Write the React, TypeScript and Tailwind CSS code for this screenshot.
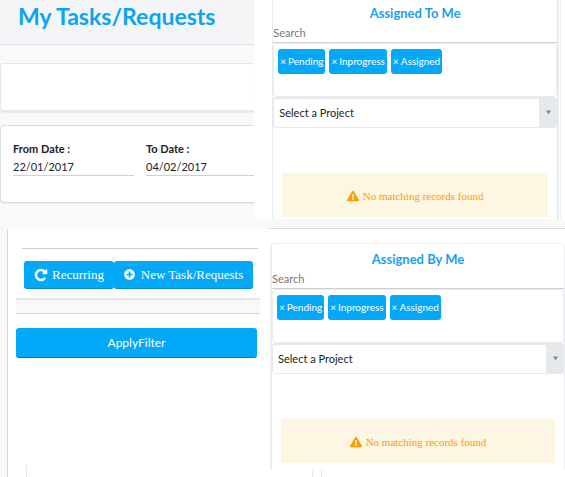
import { FaExclamationTriangle, FaPlusCircle } from "react-icons/fa";

const statuses = ["Pending", "Inprogress", "Assigned"];

function RepeatIcon() {
  return (
    <svg width="14" height="14" viewBox="0 0 1792 1792" fill="currentColor" stroke="currentColor" strokeWidth="60" aria-hidden="true">
      <path d="M1664 256v448q0 26-19 45t-45 19h-448q-42 0-59-40-17-39 14-69l138-138q-148-137-349-137-104 0-198.5 40.5t-163.5 109.5-109.5 163.5-40.5 198.5 40.5 198.5 109.5 163.5 163.5 109.5 198.5 40.5q119 0 225-52t179-147q7-10 23-12 15 0 25 9l137 138q9 8 9.5 20.5t-7.5 22.5q-109 132-264 204.5t-327 72.5q-156 0-298-61t-245-164-164-245-61-298 61-298 164-245 245-164 298-61q147 0 284.5 55.5t244.5 156.5l130-129q29-31 70-14 39 17 39 59z" />
    </svg>
  );
}

function DateField({ id, label, value, className }: { id: string; label: string; value: string; className: string }) {
  return (
    <div className={className}>
      <label htmlFor={id} className="block text-[11px] leading-4 font-bold text-[#222]">
        {label}
      </label>
      <input
        id={id}
        type="text"
        defaultValue={value}
        className="block h-[19px] w-full border-b border-[#d0d0d0] bg-transparent text-[11px] text-[#222] outline-none"
      />
    </div>
  );
}

function TaskPanel({ id, title }: { id: string; title: string }) {
  return (
    <>
      <h2 className="text-center text-[13px] leading-5 font-bold text-[#1a9ff0]">{title}</h2>
      <input
        type="text"
        aria-label={`Search ${title}`}
        placeholder="Search"
        className="block h-5 w-full border-b border-[#cfcfcf] bg-transparent text-[11px] text-[#333] outline-none placeholder:text-[#777]"
      />
      <div className="flex h-[54px] items-start gap-1 rounded-sm border border-[#e8ecef] pt-[5px] pl-1">
        {statuses.map((status) => (
          <button
            key={status}
            type="button"
            className="flex h-[25px] items-center gap-0.5 rounded-[3px] bg-[#03a9f8] px-0.5 text-[10px] whitespace-nowrap text-white"
          >
            <span aria-hidden="true">×</span>
            {status}
          </button>
        ))}
      </div>
      <div className="grid">
        <select
          id={id}
          aria-label={`Project for ${title}`}
          className="col-start-1 row-start-1 h-[31px] w-full appearance-none rounded-sm border border-t-2 border-[#e5e9ec] bg-white px-[5px] text-[11px] text-[#222] outline-none"
        >
          <option>Select a Project</option>
        </select>
        <span className="pointer-events-none col-start-1 row-start-1 flex h-[31px] w-[18px] items-center justify-center justify-self-end rounded-r-sm bg-[#e5e9ec]">
          <svg width="5" height="5" viewBox="0 0 5 5" aria-hidden="true">
            <path d="M0 0.5h5L2.5 4.5z" fill="#888" />
          </svg>
        </span>
      </div>
      <div className="mx-[9px] mt-[45px] flex h-11 items-center justify-center gap-1 bg-[#fdf6e2] pt-0.5 font-['Liberation_Serif',serif] text-[11px] text-[#ff9c07]">
        <FaExclamationTriangle size={12} aria-hidden="true" />
        No matching records found
      </div>
    </>
  );
}

export default function App() {
  return (
    <main className="min-h-screen overflow-hidden bg-white font-['Lato',sans-serif]">
      <div className="flex h-[219px]">
        <section className="w-[45%] shrink-0 bg-[#f9f9f9]">
          <header className="h-[45px] border-b border-[#dbe1e6] bg-[#f3f5f7] pt-px pl-[18px]">
            <h1 className="text-[23px] leading-[30px] font-bold whitespace-nowrap text-[#09a5f5]">My Tasks/Requests</h1>
          </header>
          <div className="mt-[18px] h-12 rounded-l-sm border border-r-0 border-[#e5e7e9] bg-white shadow-[0_2px_1px_#e9e9e9]" />
          <div className="mt-[14px] flex h-[78px] gap-3 rounded-l-sm border border-r-0 border-[#d9dbdd] bg-white pt-[15px] pl-3 shadow-[0_1px_1px_#eeeeee]">
            <DateField id="from-date" label="From Date :" value="22/01/2017" className="w-[121px]" />
            <DateField id="to-date" label="To Date :" value="04/02/2017" className="min-w-0 flex-1" />
          </div>
        </section>
        <section className="mr-px ml-[18px] min-w-0 flex-1 border-r-2 border-l border-[#e8ebef] pt-[3px]">
          <TaskPanel id="project-to" title="Assigned To Me" />
        </section>
        <div className="w-[5px] border-l border-[#f0f0f0]" />
      </div>

      <div className="flex h-[10px] bg-[#f9f9f9]">
        <div className="w-[269px]" />
        <div className="flex-1 border-b border-[#dcdcdc]" />
      </div>

      <div className="flex h-[248px] bg-[#f9f9f9] pl-[7px]">
        <section className="flex w-[253px] shrink-0 flex-col border-l border-[#d8d8d8] bg-white">
          <div className="mt-[19px] mr-0.5 ml-[14px] border-t border-[#cfcfcf]" />
          <div className="mt-3 ml-4 flex font-['Liberation_Serif',serif] text-[13px] whitespace-nowrap text-white">
            <button
              type="button"
              className="flex h-7 w-[90px] items-center justify-center gap-1 rounded-[3px] border-b border-[#078dcc] bg-[#03a9f8]"
            >
              <RepeatIcon />
              Recurring
            </button>
            <button
              type="button"
              className="flex h-7 w-[139px] items-center justify-center gap-1.5 rounded-[3px] border-b border-[#078dcc] bg-[#03a9f8]"
            >
              <FaPlusCircle size={11} aria-hidden="true" />
              New Task/Requests
            </button>
          </div>
          <div className="mt-[9px] ml-2 h-4 border-t-2 border-b border-t-[#e6e6e6] border-b-[#d9d9d9] bg-[#f9f9f9]" />
          <button
            type="button"
            className="mt-[14px] mr-[3px] ml-2 h-[30px] rounded-[3px] border-b border-[#0878b5] bg-[#03a9f8] text-xs text-white"
          >
            ApplyFilter
          </button>
          <div className="mt-auto ml-[18px] h-3 border-l border-[#e6e6e6]" />
        </section>
        <div className="min-w-0 flex-1 bg-white pt-[14px] pl-[10px]">
          <section className="h-[227px] rounded-t-sm border-t border-r border-l-2 border-[#eceef1] pt-[5px]">
            <TaskPanel id="project-by" title="Assigned By Me" />
          </section>
          <div className="ml-[42px] h-[7px] w-[10px] border-x border-[#e9e9e9]" />
        </div>
      </div>
    </main>
  );
}
